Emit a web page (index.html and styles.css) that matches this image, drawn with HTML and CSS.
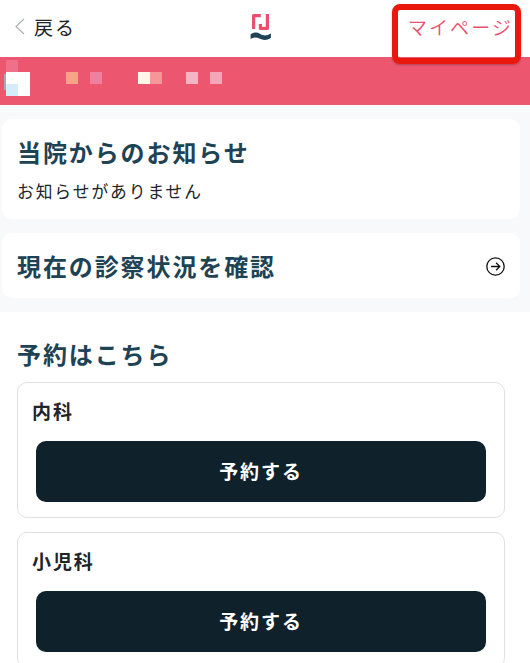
FILE: index.html
```html
<!DOCTYPE html>
<html lang="ja">
<head>
    <meta charset="UTF-8">
    <meta name="viewport" content="width=device-width, initial-scale=1.0">
    <title>予約</title>
    <link rel="stylesheet" href="styles.css">
</head>
<body>
    <header class="header">
        <a href="#" class="back-link">
            <svg class="back-icon" width="10" height="17" viewBox="0 0 10 17" fill="none" stroke="#a9aeb3" stroke-width="1.1">
                <path d="M9 1L1 8.5L9 16"/>
            </svg>
            戻る
        </a>
        <svg class="logo" width="22" height="28" viewBox="0 0 22 28">
            <path d="M3.600 16V2.600H10.800" fill="none" stroke="#ea4f6d" stroke-width="3.2" stroke-linejoin="round"/>
            <path d="M17.400 1V15.400H10.400V11" fill="none" stroke="#ea4f6d" stroke-width="3.2" stroke-linejoin="round"/>
            <path d="M.6 21.400C4 19 7 19 10.300 21C14 23.200 17 22.800 20.900 20.600V25.100C17 27.600 13 27.600 9.400 25.600C6.500 24 4 24 .6 26Z" fill="#1d4354"/>
        </svg>
        <a href="#" class="mypage-link">マイページ</a>
        <div class="highlight"></div>
    </header>

    <div class="banner">
        <svg width="530" height="48" viewBox="0 0 530 48" shape-rendering="crispEdges">
            <rect x="4" y="17" width="3" height="16" rx="2" fill="#a5a6c0"/>
            <rect x="6" y="3" width="12" height="12" fill="#ef7089"/>
            <rect x="6" y="15" width="24" height="24" fill="#fff"/>
            <rect x="6" y="27" width="12" height="12" fill="#d5edfa"/>
            <rect x="66" y="15" width="12" height="12" fill="#f8a287"/>
            <rect x="90" y="15" width="12" height="12" fill="#ef7f9e"/>
            <rect x="138" y="15" width="12" height="12" fill="#fff5e8"/>
            <rect x="150" y="15" width="12" height="12" fill="#f79698"/>
            <rect x="186" y="15" width="12" height="12" fill="#f5b5c5"/>
            <rect x="210" y="15" width="12" height="12" fill="#f5a5ba"/>
        </svg>
    </div>

    <section class="info">
        <div class="info-card">
            <h2>当院からのお知らせ</h2>
            <p>お知らせがありません</p>
        </div>
        <a href="#" class="info-card status-card">
            <h2>現在の診察状況を確認</h2>
            <svg width="20" height="20" viewBox="0 0 20 20" fill="none" stroke="#111" stroke-width="1.3">
                <circle cx="9.500" cy="10.500" r="8.700"/>
                <path d="M5 10.500H13.700M10.100 6.800L13.800 10.500L10.100 14.200"/>
            </svg>
        </a>
    </section>

    <main class="reserve">
        <h2>予約はこちら</h2>
        <div class="reserve-card">
            <h3>内科</h3>
            <button type="button" class="reserve-button">予約する</button>
        </div>
        <div class="reserve-card">
            <h3>小児科</h3>
            <button type="button" class="reserve-button">予約する</button>
        </div>
    </main>
</body>
</html>
```
FILE: styles.css
```css
html, body {
    height: 100%;
    margin: 0;
    padding: 0;
    overflow: hidden;
}

body {
    font-family: "Noto Sans CJK JP", sans-serif;
    letter-spacing: 1.9px;
    color: #212529;
    background-color: #fff;
}

h2, h3, p {
    margin: 0;
}

a {
    color: inherit;
    text-decoration: none;
}

h2 {
    font-size: 24px;
    line-height: 36px;
    font-weight: 700;
    color: #1d4354;
}

.header {
    position: relative;
    display: grid;
    grid-template-columns: 235px auto 1fr;
    align-items: center;
    height: 57px;
    padding: 0 17px 3px 15px;
    box-sizing: border-box;
    font-size: 19px;
}

.back-link {
    display: flex;
    align-items: center;
    gap: 9px;
    margin-top: -1px;
}

.mypage-link {
    justify-self: end;
    margin-top: -1px;
    color: #ea4f6d;
    font-weight: 350;
    letter-spacing: 2.1px;
}

/* マイページの強調枠 */
.highlight {
    position: absolute;
    top: 4px;
    left: 392px;
    width: 129px;
    height: 60px;
    box-sizing: border-box;
    border: 6px solid #e8190c;
    border-radius: 8px;
    box-shadow: 0 1px 2px rgba(0, 0, 0, 0.25);
}

.banner {
    height: 48px;
    background-color: #ec566e;
}

.banner svg {
    display: block;
}

.info {
    display: flex;
    flex-direction: column;
    gap: 14px;
    padding: 14px 10px 14px 2px;
    background-color: #f8f9fb;
}

.info-card {
    padding: 15px 15px 15px;
    border-radius: 10px;
    background-color: #fff;
}

.info-card p {
    margin-top: 8px;
    font-size: 16.8px;
    line-height: 26px;
}

.status-card {
    display: flex;
    align-items: center;
    justify-content: space-between;
    height: 65px;
    padding: 0 14px 0 15px;
    box-sizing: border-box;
}

.reserve {
    padding: 24px 25px 0 17px;
}

.reserve-card {
    height: 136px;
    margin-bottom: 14px;
    padding: 13px 18px 15px;
    box-sizing: border-box;
    border: 1px solid #dee0e2;
    border-radius: 10px;
}

.reserve h2 {
    margin-bottom: 10px;
}

.reserve-card h3 {
    margin: 0 0 15px -4px;
    font-size: 19px;
    line-height: 30px;
}

.reserve-button {
    display: block;
    width: 100%;
    height: 61px;
    padding: 0 6px 2px;
    border: none;
    border-radius: 10px;
    background-color: #0f212a;
    color: #fff;
    font-family: inherit;
    font-size: 19px;
    font-weight: 700;
    letter-spacing: inherit;
    cursor: pointer;
}
```
